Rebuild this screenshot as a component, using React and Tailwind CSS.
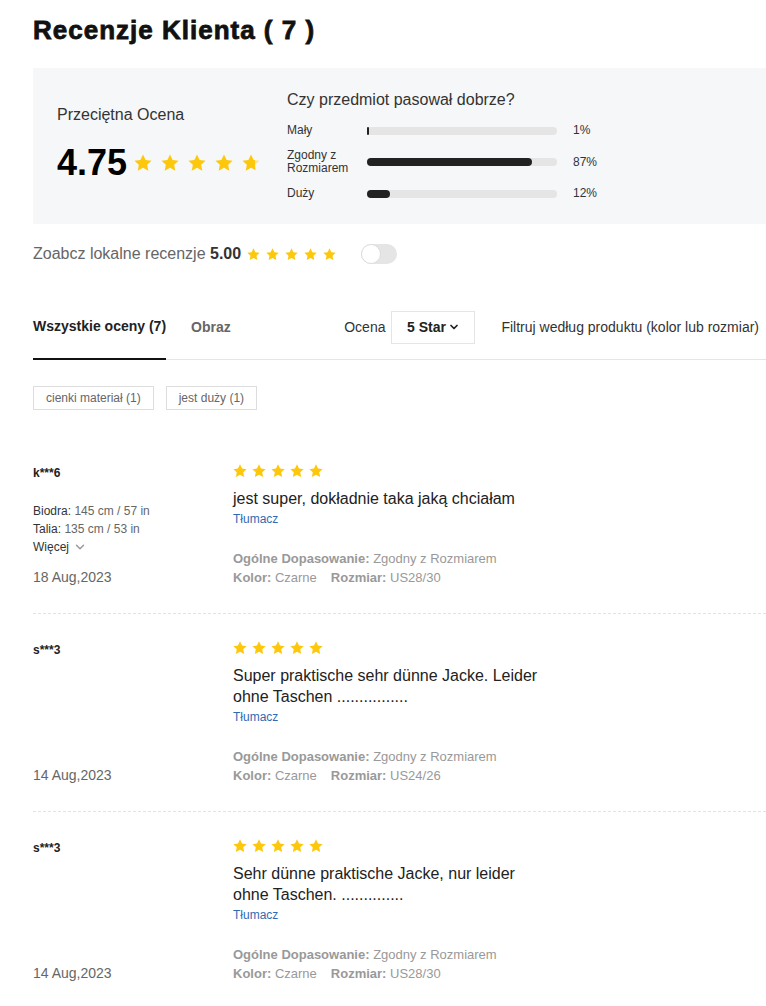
import { ChevronDown } from 'lucide-react';

const fit = [
  { label: 'Mały', pct: 1 },
  { label: 'Zgodny z Rozmiarem', pct: 87 },
  { label: 'Duży', pct: 12 },
];

const reviews = [
  {
    user: 'k***6',
    body: ['Biodra', '145 cm / 57 in', 'Talia', '135 cm / 53 in'],
    text: 'jest super, dokładnie taka jaką chciałam',
    date: '18 Aug,2023',
    size: 'US28/30',
  },
  {
    user: 's***3',
    text: 'Super praktische sehr dünne Jacke. Leider ohne Taschen ................',
    date: '14 Aug,2023',
    size: 'US24/26',
  },
  {
    user: 's***3',
    text: 'Sehr dünne praktische Jacke, nur leider ohne Taschen. ..............',
    date: '14 Aug,2023',
    size: 'US28/30',
  },
];

// pojedyncza gwiazdka; fill < 1 daje częściowo wypełnioną
function Star({ size, fill = 1, id }) {
  return (
    <svg width={size} height={size} viewBox="0 0 20 19">
      {fill < 1 && (
        <defs>
          <linearGradient id={id}>
            <stop offset={`${fill * 100}%`} stopColor="#fdc80c" />
            <stop offset={`${fill * 100}%`} stopColor="#fde68a" />
          </linearGradient>
        </defs>
      )}
      <polygon
        points="10,0 12.9,6.1 19.5,6.9 14.6,11.4 15.9,18 10,14.7 4.1,18 5.4,11.4 0.5,6.9 7.1,6.1"
        fill={fill < 1 ? `url(#${id})` : '#fdc80c'}
      />
    </svg>
  );
}

function Stars({ size, gap, last = 1 }) {
  return (
    <div className={`flex items-center ${gap}`}>
      {[0, 1, 2, 3].map((i) => (
        <Star key={i} size={size} />
      ))}
      <Star size={size} fill={last} id="half-star" />
    </div>
  );
}

function Review({ r, first }) {
  return (
    <div
      className={`flex border-b border-dashed border-[#e3e3e3] pb-[26px] ${
        first ? 'pt-[54px]' : 'pt-[27px]'
      }`}
    >
      {/* kolumna z autorem */}
      <div className="flex w-[200px] flex-col">
        <div className="mt-[2px] text-[12px] font-bold leading-[14px] text-[#222]">{r.user}</div>
        {r.body && (
          <div className="mt-[22px] text-[12px] leading-[18px] text-[#666]">
            <div>
              <span className="text-[#333]">{r.body[0]}:</span> {r.body[1]}
            </div>
            <div>
              <span className="text-[#333]">{r.body[2]}:</span> {r.body[3]}
            </div>
            <div className="flex items-center gap-[4px] text-[#333]">
              Więcej <ChevronDown size={14} strokeWidth={2.5} className="text-[#999]" />
            </div>
          </div>
        )}
        <div className="mt-auto text-[14px] leading-[19px] text-[#666]">{r.date}</div>
      </div>

      {/* treść recenzji */}
      <div className="flex flex-col">
        <Stars size={14} gap="gap-[5px]" />
        <p className="mt-[10px] max-w-[315px] text-[16px] leading-[21px] text-[#222]">{r.text}</p>
        <div className="mt-[3px] text-[12px] leading-[14px] text-[#2f6bb5]">Tłumacz</div>
        <div className="mt-[23px] text-[13px] leading-[19px] text-[#999]">
          <div>
            <span className="font-bold">Ogólne Dopasowanie:</span> Zgodny z Rozmiarem
          </div>
          <div>
            <span className="font-bold">Kolor:</span> Czarne
            <span className="ml-[14px] font-bold">Rozmiar:</span> {r.size}
          </div>
        </div>
      </div>
    </div>
  );
}

export default function App() {
  return (
    <div className="min-h-screen bg-white pl-[33px] font-['Liberation_Sans',Arial,sans-serif] text-[#222]">
      <h1 className="pt-[14px] text-[26px] font-bold leading-[32px] tracking-[1px] text-[#111] [-webkit-text-stroke:0.8px_#111]">
        Recenzje Klienta ( 7 )
      </h1>

      {/* podsumowanie ocen */}
      <div className="mt-[22px] flex h-[156px] bg-[#f6f7f9] pl-[24px]">
        <div className="w-[230px] pt-[37px]">
          <div className="text-[16px] leading-[20px] text-[#333]">Przeciętna Ocena</div>
          <div className="mt-[18px] flex items-center gap-[7px]">
            <span className="text-[36px] font-bold leading-[40px] text-black">4.75</span>
            <Stars size={18} gap="gap-[9px]" last={0.75} />
          </div>
        </div>
        <div className="pt-[22px]">
          <div className="text-[16px] leading-[20px] text-[#333]">Czy przedmiot pasował dobrze?</div>
          <div className="mt-[14px] flex flex-col gap-[12px]">
            {fit.map((f) => (
              <div key={f.label} className="flex items-center text-[12px] leading-[13px] text-[#333]">
                <div className="w-[80px]">{f.label}</div>
                <div className="h-[8px] w-[190px] rounded-full bg-[#e5e5e5]">
                  <div
                    className="h-full rounded-full bg-[#222]"
                    style={{ width: `${Math.max(f.pct, 1)}%` }}
                  />
                </div>
                <div className="ml-[16px]">{f.pct}%</div>
              </div>
            ))}
          </div>
        </div>
      </div>

      {/* lokalne recenzje */}
      <div className="mt-[20px] flex items-center">
        <span className="text-[16px] leading-[20px] text-[#666]">
          Zoabcz lokalne recenzje <span className="font-bold text-[#333]">5.00</span>
        </span>
        <div className="ml-[6px]">
          <Stars size={13} gap="gap-[6px]" />
        </div>
        <div className="ml-[25px] flex h-[20px] w-[36px] rounded-full bg-[#e5e5e5]">
          <div className="h-[20px] w-[20px] rounded-full border border-[#ddd] bg-white" />
        </div>
      </div>

      {/* zakładki i filtry */}
      <div className="mt-[30px] flex h-[66px] items-stretch border-b border-[#e5e5e5] pt-px text-[14px]">
        <div className="-mb-px flex items-center border-b-2 border-[#111] font-bold text-[#222]">
          Wszystkie oceny (7)
        </div>
        <div className="ml-[25px] flex items-center font-bold text-[#666]">Obraz</div>
        <div className="ml-auto flex items-center pr-[7px] text-[#333]">
          <span>Ocena</span>
          <div className="ml-[6px] flex h-[33px] w-[84px] items-center justify-center gap-[2px] border border-[#e5e5e5] font-bold text-[#222]">
            5 Star <ChevronDown size={12} strokeWidth={3.5} />
          </div>
          <span className="ml-[26px]">Filtruj według produktu (kolor lub rozmiar)</span>
        </div>
      </div>

      {/* tagi */}
      <div className="mt-[26px] flex gap-[12px]">
        {['cienki materiał (1)', 'jest duży (1)'].map((t) => (
          <div key={t} className="flex h-[24px] items-center border border-[#ddd] px-[12px] text-[12px] text-[#666]">
            {t}
          </div>
        ))}
      </div>

      <div>
        {reviews.map((r, i) => (
          <Review key={i} r={r} first={i === 0} />
        ))}
      </div>
    </div>
  );
}
